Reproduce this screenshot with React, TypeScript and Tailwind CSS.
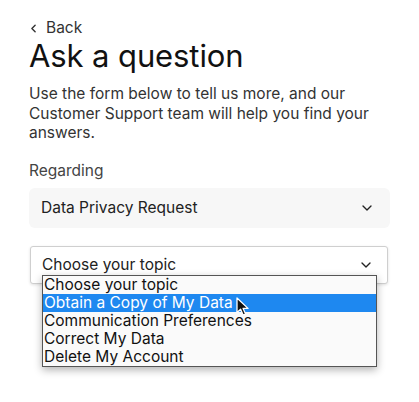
import { ChevronDown, ChevronLeft } from "lucide-react";

const topics = [
    "Choose your topic",
    "Obtain a Copy of My Data",
    "Communication Preferences",
    "Correct My Data",
    "Delete My Account",
];

function Pointer() {
    return (
        <svg width="14" height="20" viewBox="0 0 14 20" className="absolute left-[193px] top-[21px]">
            <path
                d="M1 1 L1 15.5 L4.6 12.3 L7.2 18.2 L9.6 17.1 L7.1 11.4 L12 11.4 Z"
                fill="#111"
                stroke="#fff"
                strokeWidth="1.3"
                strokeLinejoin="round"
            />
        </svg>
    );
}

export default function App() {
    return (
        <div className="min-h-[402px] w-[419px] bg-white font-['Inter','Liberation_Sans',sans-serif]">
            <div className="px-[29px] pt-[20px]">
                <button className="flex items-center gap-[6px] text-[15.5px] leading-[16px] text-[#333]">
                    <ChevronLeft size={13} strokeWidth={2.6} className="-ml-[2px]" />
                    Back
                </button>
                <h1 className="mt-[1px] text-[31px] leading-[38px] text-[#111] tracking-[-0.1px]">
                    Ask a question
                </h1>
                <p className="mt-[9px] text-[15.5px] leading-[19.5px] text-[#333]">
                    Use the form below to tell us more, and our Customer Support team will help you find your answers.
                </p>
                <div className="mt-[18px] text-[15.5px] leading-[20px] text-[#444]">Regarding</div>
                <div className="mt-[7px] flex h-[40px] items-center justify-between rounded-md bg-[#f7f7f7] pl-[12px] pr-[15px] text-[15.5px] text-[#222]">
                    <span>Data Privacy Request</span>
                    <ChevronDown size={16} strokeWidth={2} className="text-[#222]" />
                </div>
                <div className="relative mt-[18px] ml-[1px] mr-[2px]">
                    <div className="flex h-[38px] items-center justify-between rounded-[3px] border border-[#cfcfcf] bg-white pl-[11px] pr-[13px] text-[15.5px] text-[#222] shadow-[0_1px_3px_rgba(0,0,0,0.12)]">
                        <span>Choose your topic</span>
                        <ChevronDown size={16} strokeWidth={2} className="text-[#222]" />
                    </div>
                    <ul className="absolute left-[12px] top-[29px] w-[335px] border border-[#555] bg-[#fafafa] shadow-[0_3px_8px_rgba(0,0,0,0.3)]">
                        {topics.map((t, i) => (
                            <li
                                key={t}
                                className={
                                    i === 1
                                        ? "h-[18px] pl-[1px] text-[15.5px] leading-[18px] bg-[#1e88f0] text-white"
                                        : "h-[18px] pl-[1px] text-[15.5px] leading-[18px] text-[#111]"
                                }
                            >
                                {t}
                            </li>
                        ))}
                        <Pointer />
                    </ul>
                </div>
            </div>
        </div>
    );
}
